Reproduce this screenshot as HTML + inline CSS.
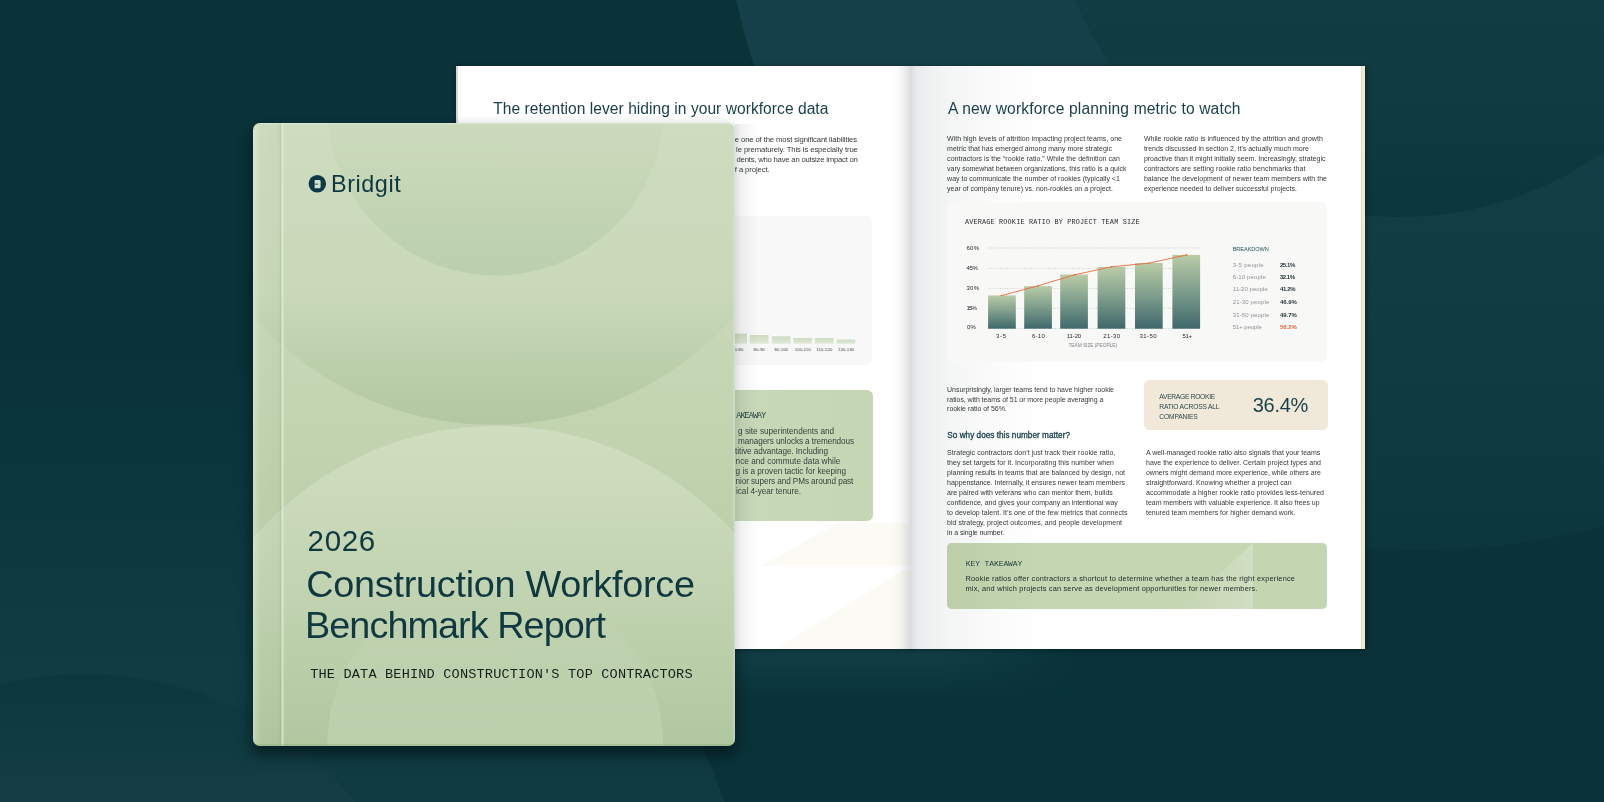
<!DOCTYPE html>
<html lang="en">
<head>
<meta charset="utf-8">
<title>2026 Construction Workforce Benchmark Report</title>
<style>
html,body{margin:0;padding:0;background:#093339;}
body{width:1604px;height:802px;overflow:hidden;font-family:"Liberation Sans",sans-serif;}
#stage{position:relative;width:1604px;height:802px;overflow:hidden;background:#093339;}
.abs{position:absolute;}
.t{position:absolute;white-space:pre;line-height:1;font-family:"Liberation Sans",sans-serif;opacity:.999;}
#bg{position:absolute;left:0;top:0;}
#book{position:absolute;left:0;top:0;width:1604px;height:802px;}
#cover{position:absolute;left:253px;top:123px;width:482px;height:623px;border-radius:7px;overflow:hidden;
  background:linear-gradient(180deg,#cedcbf 0%,#c8d8b8 30%,#c1d3af 52%,#b9cda8 75%,#b0c7a0 100%);}
#covershadow{position:absolute;left:253px;top:123px;width:482px;height:623px;border-radius:7px;
  box-shadow:0 8px 14px 1px rgba(2,14,18,.62);clip-path:polygon(-40px -40px,482px -40px,482px 527px,540px 527px,540px 700px,-40px 700px);}
</style>
</head>
<body>
<div id="stage">

<!-- ================= BACKGROUND ================= -->
<svg id="bg" width="1604" height="802" viewBox="0 0 1604 802">
  <defs>
    <linearGradient id="gB" gradientUnits="userSpaceOnUse" x1="0" y1="0" x2="0" y2="560">
      <stop offset="0" stop-color="#16414a"/><stop offset=".4" stop-color="#123d45"/><stop offset=".8" stop-color="#0e3941"/><stop offset="1" stop-color="#0c363e"/>
    </linearGradient>
    <linearGradient id="gA" gradientUnits="userSpaceOnUse" x1="0" y1="0" x2="0" y2="217">
      <stop offset="0" stop-color="#123c44"/><stop offset=".5" stop-color="#0f3a42"/><stop offset="1" stop-color="#0a363e"/>
    </linearGradient>
    <linearGradient id="gD" gradientUnits="userSpaceOnUse" x1="0" y1="347" x2="0" y2="802">
      <stop offset="0" stop-color="#093339"/><stop offset=".35" stop-color="#0c373e"/><stop offset=".72" stop-color="#103c44"/><stop offset="1" stop-color="#0f3a41"/>
    </linearGradient>
    <linearGradient id="gC" gradientUnits="userSpaceOnUse" x1="0" y1="674" x2="0" y2="802">
      <stop offset="0" stop-color="#0b373f"/><stop offset="1" stop-color="#153e44"/>
    </linearGradient>
    <linearGradient id="gU" gradientUnits="userSpaceOnUse" x1="0" y1="649" x2="0" y2="700">
      <stop offset="0" stop-color="#1a4850" stop-opacity=".55"/><stop offset="1" stop-color="#1a4850" stop-opacity="0"/>
    </linearGradient>
    <linearGradient id="gUm" gradientUnits="userSpaceOnUse" x1="735" y1="0" x2="1080" y2="0">
      <stop offset="0" stop-color="#fff"/><stop offset=".6" stop-color="#fff"/><stop offset="1" stop-color="#000"/>
    </linearGradient>
    <mask id="mU"><rect x="735" y="640" width="400" height="70" fill="url(#gUm)"/></mask>
  </defs>
  <rect width="1604" height="802" fill="#093339"/>
  <circle cx="85" cy="1024" r="677" fill="url(#gD)"/>
  <circle cx="85" cy="1024" r="350" fill="url(#gC)"/>
  <circle cx="1420" cy="-150" r="700" fill="url(#gB)"/>
  <circle cx="1400" cy="-135" r="352" fill="url(#gA)"/>
  <rect x="735" y="649" width="400" height="55" fill="url(#gU)" mask="url(#mU)"/>
</svg>

<!-- ================= OPEN BOOK ================= -->
<div id="book">
  <div class="abs" style="left:456px;top:65.8px;width:909.3px;height:583.7px;box-shadow:1px 1px 4px rgba(0,18,22,.6);background:linear-gradient(90deg,#d6d2c6 0,#e2dfd4 2.6px,#fff 3.6px,#fff 904.6px,#d9d5cc 904.6px,#e6dfc4 906px,#f1eac6 906.4px,#f4eecd 100%);"></div>
  <!-- left page -->
  <div class="abs" id="lp" style="left:458px;top:65.8px;width:452px;height:583.7px;background:#fff;overflow:hidden;">
    <!-- cream geometric pattern at bottom -->
    <svg class="abs" style="left:0;top:0" width="452" height="583" viewBox="0 0 452 583">
      <polygon points="302,500 380,457 452,457 452,500" fill="#fbfaf4"/>
      <polygon points="318,583 445.7,504 452,504 452,583" fill="#fbfaf4"/>
    </svg>
    <!-- chart card -->
    <div class="abs" style="left:35.6px;top:150px;width:378.5px;height:149px;border-radius:6px;background:#f8f8f8;"></div>
    <svg class="abs" style="left:0;top:0" width="452" height="583" viewBox="458 66 452 583">
      <defs><linearGradient id="lb" x1="0" y1="0" x2="0" y2="1"><stop offset="0" stop-color="#cfdcc2"/><stop offset="1" stop-color="#dfe8d6"/></linearGradient></defs>
      <g fill="url(#lb)">
        <rect x="706.6" y="329" width="18.8" height="14.7"/>
        <rect x="728.2" y="333.6" width="18.8" height="10.1"/>
        <rect x="749.8" y="335" width="18.8" height="8.7"/>
        <rect x="771.8" y="336.3" width="18.8" height="7.4"/>
        <rect x="793.3" y="338" width="18.8" height="5.7"/>
        <rect x="814.8" y="338" width="18.8" height="5.7"/>
        <rect x="836.6" y="339.6" width="18.8" height="4.1"/>
      </g>
      <g font-family="'Liberation Sans',sans-serif" font-size="4.4" fill="#3a3f42" text-anchor="middle">
        <text x="737.6" y="350.8">70-80</text>
        <text x="759.2" y="350.8">80-90</text>
        <text x="781.2" y="350.8">90-100</text>
        <text x="802.7" y="350.8">100-110</text>
        <text x="824.2" y="350.8">110-120</text>
        <text x="846" y="350.8">120-130</text>
      </g>
    </svg>
    <!-- key takeaway box -->
    <div class="abs" style="left:35.6px;top:324px;width:379.4px;height:131.4px;border-radius:6px;background:linear-gradient(90deg,#c2d4b0 0%,#c9d9b9 55%,#c5d6b4 100%);"></div>
    <!-- gutter shadow -->
    <div class="abs" style="right:0;top:0;width:16px;height:584px;background:linear-gradient(90deg,rgba(120,122,130,0) 0%,rgba(120,122,130,.07) 45%,rgba(110,112,120,.21) 100%);"></div>
  </div>
  <!-- right page -->
  <div class="abs" id="rp" style="left:910px;top:65.8px;width:450.8px;height:583.7px;background:#fff;overflow:hidden;">
    <div class="abs" style="left:0;top:0;width:130px;height:584px;background:linear-gradient(90deg,#d9dadd 0%,#e6e8e9 4%,#eeeff0 12%,#f4f5f5 30%,#fafafa 60%,#fff 100%);"></div>
    <!-- chart card -->
    <div class="abs" style="left:37.3px;top:136.5px;width:379.4px;height:159.5px;border-radius:6px;background:#f8f8f7;"></div>
    <!-- stat box -->
    <div class="abs" style="left:234px;top:314px;width:183.6px;height:50px;border-radius:5.5px;background:#f0e9d9;"></div>
    <!-- key takeaway -->
    <div class="abs" style="left:36.8px;top:477px;width:380.4px;height:65.8px;border-radius:5px;overflow:hidden;background:#c5d6b3;">
      <svg class="abs" style="left:0;top:0" width="381" height="66" viewBox="0 0 381 66">
        <defs><linearGradient id="kt" x1="0" y1="0" x2="1" y2="0"><stop offset="0" stop-color="#bccfa9"/><stop offset="1" stop-color="#c4d5b2"/></linearGradient></defs>
        <rect x="0" y="0" width="84" height="66" fill="url(#kt)"/>
        <defs><linearGradient id="tri" x1="0" y1="0" x2="1" y2="0"><stop offset="0" stop-color="#c9d9b9" stop-opacity=".2"/><stop offset="1" stop-color="#d1dfc3"/></linearGradient></defs><polygon points="233,66 306,0 306,66" fill="url(#tri)"/>
        <rect x="306" y="0" width="75" height="66" fill="#c4d5b2"/>
      </svg>
    </div>
    <svg class="abs" style="left:0;top:0" width="450.8" height="583" viewBox="910 66 450.8 583">
      <defs><linearGradient id="bar" x1="0" y1="0" x2="0" y2="1"><stop offset="0" stop-color="#b9cca6"/><stop offset=".5" stop-color="#7d9d8c"/><stop offset="1" stop-color="#3f686b"/></linearGradient></defs>
      <g stroke="#b9bcb9" stroke-width=".8" stroke-dasharray=".9 1.5" fill="none">
        <path d="M988 248H1200.5M988 268.4H1200.5M988 288.4H1200.5M988 308.3H1200.5M988 328.5H1200.5"/>
      </g>
      <g fill="url(#bar)">
        <rect x="988.1" y="295.4" width="27.7" height="33.3"/>
        <rect x="1024.2" y="286.1" width="27.7" height="42.6"/>
        <rect x="1060.2" y="274.5" width="27.7" height="54.2"/>
        <rect x="1097.6" y="267.0" width="27.7" height="61.7"/>
        <rect x="1135.0" y="263.0" width="27.7" height="65.7"/>
        <rect x="1172.4" y="254.9" width="27.7" height="73.8"/>
      </g>
      <polyline points="1001.4,295.6 1038.1,285.8 1074.6,274.8 1111.4,266.8 1148.8,263.2 1186.8,254.9" fill="none" stroke="#ee6a3a" stroke-width=".9" stroke-linejoin="round"/>
      <g fill="#ea6a3c"><circle cx="1001.4" cy="295.6" r=".8"/><circle cx="1038.1" cy="285.8" r=".8"/><circle cx="1074.6" cy="274.8" r=".8"/><circle cx="1111.4" cy="266.8" r=".8"/><circle cx="1148.8" cy="263.2" r=".8"/><circle cx="1186.8" cy="254.9" r=".8"/></g>
    </svg>
  </div>
<div class="t" style="top:100.69px;font-size:15.6px;color:#173f49;letter-spacing:0.144px;left:948.00px;">A new workforce planning metric to watch</div>
<div class="t" style="top:100.69px;font-size:15.6px;color:#173f49;letter-spacing:0.031px;left:493.20px;">The retention lever hiding in your workforce data</div>
<div class="t" style="top:134.77px;font-size:7px;color:#35393c;letter-spacing:0.031px;left:947.10px;">With high levels of attrition impacting project teams, one</div>
<div class="t" style="top:144.77px;font-size:7px;color:#35393c;letter-spacing:0.013px;left:947.10px;">metric that has emerged among many more strategic</div>
<div class="t" style="top:154.77px;font-size:7px;color:#35393c;letter-spacing:0.034px;left:947.10px;">contractors is the “rookie ratio.” While the definition can</div>
<div class="t" style="top:164.77px;font-size:7px;color:#35393c;letter-spacing:-0.020px;left:947.10px;">vary somewhat between organizations, this ratio is a quick</div>
<div class="t" style="top:174.77px;font-size:7px;color:#35393c;letter-spacing:0.004px;left:947.10px;">way to communicate the number of rookies (typically &lt;1</div>
<div class="t" style="top:184.77px;font-size:7px;color:#35393c;letter-spacing:0.003px;left:947.10px;">year of company tenure) vs. non-rookies on a project.</div>
<div class="t" style="top:134.77px;font-size:7px;color:#35393c;letter-spacing:0.025px;left:1143.90px;">While rookie ratio is influenced by the attrition and growth</div>
<div class="t" style="top:144.77px;font-size:7px;color:#35393c;letter-spacing:0.005px;left:1143.90px;">trends discussed in section 2, it’s actually much more</div>
<div class="t" style="top:154.77px;font-size:7px;color:#35393c;left:1143.90px;">proactive than it might initially seem. Increasingly, strategic</div>
<div class="t" style="top:164.77px;font-size:7px;color:#35393c;letter-spacing:0.039px;left:1143.90px;">contractors are setting rookie ratio benchmarks that</div>
<div class="t" style="top:174.77px;font-size:7px;color:#35393c;letter-spacing:0.026px;left:1143.90px;">balance the development of newer team members with the</div>
<div class="t" style="top:184.77px;font-size:7px;color:#35393c;letter-spacing:0.004px;left:1143.90px;">experience needed to deliver successful projects.</div>
<div class="t" style="top:218.89px;font-size:6.8px;color:#2a2f31;font-family:'Liberation Mono', monospace;letter-spacing:0.182px;left:965.00px;">AVERAGE ROOKIE RATIO BY PROJECT TEAM SIZE</div>
<div class="t" style="top:385.57px;font-size:7px;color:#35393c;letter-spacing:-0.048px;left:947.10px;">Unsurprisingly, larger teams tend to have higher rookie</div>
<div class="t" style="top:395.52px;font-size:7px;color:#35393c;letter-spacing:-0.067px;left:947.10px;">ratios, with teams of 51 or more people averaging a</div>
<div class="t" style="top:405.47px;font-size:7px;color:#35393c;letter-spacing:-0.032px;left:947.10px;">rookie ratio of 56%.</div>
<div class="t" style="top:393.63px;font-size:6.7px;color:#2c474c;letter-spacing:-0.294px;left:1159.30px;">AVERAGE ROOKIE</div>
<div class="t" style="top:403.63px;font-size:6.7px;color:#2c474c;letter-spacing:-0.184px;left:1159.30px;">RATIO ACROSS ALL</div>
<div class="t" style="top:413.63px;font-size:6.7px;color:#2c474c;letter-spacing:-0.155px;left:1159.30px;">COMPANIES</div>
<div class="t" style="top:395.07px;font-size:20px;color:#173f49;letter-spacing:-0.305px;left:1252.80px;">36.4%</div>
<div class="t" style="top:432.06px;font-size:8.2px;color:#173f49;letter-spacing:0.024px;left:947.30px;-webkit-text-stroke:0.3px #173f49;">So why does this number matter?</div>
<div class="t" style="top:448.57px;font-size:7px;color:#35393c;letter-spacing:0.050px;left:947.10px;">Strategic contractors don’t just track their rookie ratio,</div>
<div class="t" style="top:458.58px;font-size:7px;color:#35393c;letter-spacing:0.028px;left:947.10px;">they set targets for it. Incorporating this number when</div>
<div class="t" style="top:468.59px;font-size:7px;color:#35393c;letter-spacing:-0.020px;left:947.10px;">planning results in teams that are balanced by design, not</div>
<div class="t" style="top:478.60px;font-size:7px;color:#35393c;letter-spacing:-0.032px;left:947.10px;">happenstance. Internally, it ensures newer team members</div>
<div class="t" style="top:488.61px;font-size:7px;color:#35393c;letter-spacing:-0.009px;left:947.10px;">are paired with veterans who can mentor them, builds</div>
<div class="t" style="top:498.62px;font-size:7px;color:#35393c;letter-spacing:-0.017px;left:947.10px;">confidence, and gives your company an intentional way</div>
<div class="t" style="top:508.63px;font-size:7px;color:#35393c;letter-spacing:0.039px;left:947.10px;">to develop talent. It’s one of the few metrics that connects</div>
<div class="t" style="top:518.64px;font-size:7px;color:#35393c;letter-spacing:0.028px;left:947.10px;">bid strategy, project outcomes, and people development</div>
<div class="t" style="top:528.65px;font-size:7px;color:#35393c;letter-spacing:-0.087px;left:947.10px;">in a single number.</div>
<div class="t" style="top:449.47px;font-size:7px;color:#35393c;letter-spacing:-0.014px;left:1146.00px;">A well-managed rookie ratio also signals that your teams</div>
<div class="t" style="top:459.47px;font-size:7px;color:#35393c;letter-spacing:0.005px;left:1146.00px;">have the experience to deliver. Certain project types and</div>
<div class="t" style="top:469.47px;font-size:7px;color:#35393c;letter-spacing:-0.028px;left:1146.00px;">owners might demand more experience, while others are</div>
<div class="t" style="top:479.47px;font-size:7px;color:#35393c;letter-spacing:-0.007px;left:1146.00px;">straightforward. Knowing whether a project can</div>
<div class="t" style="top:489.47px;font-size:7px;color:#35393c;letter-spacing:0.025px;left:1146.00px;">accommodate a higher rookie ratio provides less-tenured</div>
<div class="t" style="top:499.47px;font-size:7px;color:#35393c;letter-spacing:-0.028px;left:1146.00px;">team members with valuable experience. It also frees up</div>
<div class="t" style="top:509.47px;font-size:7px;color:#35393c;letter-spacing:-0.009px;left:1146.00px;">tenured team members for higher demand work.</div>
<div class="t" style="top:560.37px;font-size:8px;color:#24413f;font-family:'Liberation Mono', monospace;letter-spacing:-0.101px;left:965.80px;">KEY TAKEAWAY</div>
<div class="t" style="top:575.24px;font-size:7.4px;color:#222c28;letter-spacing:0.207px;left:965.50px;">Rookie ratios offer contractors a shortcut to determine whether a team has the right experience</div>
<div class="t" style="top:585.14px;font-size:7.4px;color:#222c28;letter-spacing:0.184px;left:965.50px;">mix, and which projects can serve as development opportunities for newer members.</div>
<div class="t" style="top:135.68px;font-size:7.7px;color:#35393c;letter-spacing:-0.118px;left:734.80px;">e one of the most significant liabilities</div>
<div class="t" style="top:145.71px;font-size:7.7px;color:#35393c;letter-spacing:-0.104px;left:736.10px;">le prematurely. This is especially true</div>
<div class="t" style="top:155.74px;font-size:7.7px;color:#35393c;letter-spacing:-0.207px;left:736.50px;">dents, who have an outsize impact on</div>
<div class="t" style="top:165.77px;font-size:7.7px;color:#35393c;letter-spacing:-0.091px;left:734.80px;">f a project.</div>
<div class="t" style="top:411.71px;font-size:8.2px;color:#24413f;font-family:'Liberation Mono', monospace;letter-spacing:-0.751px;left:736.30px;">AKEAWAY</div>
<div class="t" style="top:427.61px;font-size:8.2px;color:#34423c;letter-spacing:-0.002px;left:738.10px;">g site superintendents and</div>
<div class="t" style="top:437.63px;font-size:8.2px;color:#34423c;letter-spacing:-0.100px;left:738.10px;">managers unlocks a tremendous</div>
<div class="t" style="top:447.65px;font-size:8.2px;color:#34423c;letter-spacing:-0.061px;left:735.00px;">titive advantage. Including</div>
<div class="t" style="top:457.67px;font-size:8.2px;color:#34423c;letter-spacing:0.019px;left:735.60px;">nce and commute data while</div>
<div class="t" style="top:467.69px;font-size:8.2px;color:#34423c;letter-spacing:-0.021px;left:735.60px;">g is a proven tactic for keeping</div>
<div class="t" style="top:477.71px;font-size:8.2px;color:#34423c;letter-spacing:-0.094px;left:735.60px;">nior supers and PMs around past</div>
<div class="t" style="top:487.73px;font-size:8.2px;color:#34423c;letter-spacing:-0.025px;left:736.00px;">ical 4-year tenure.</div>
<div class="t" style="top:245.42px;font-size:6px;color:#1f2527;letter-spacing:0.292px;left:966.40px;">60%</div>
<div class="t" style="top:264.82px;font-size:6px;color:#1f2527;letter-spacing:-0.258px;left:966.40px;">45%</div>
<div class="t" style="top:284.72px;font-size:6px;color:#1f2527;letter-spacing:0.292px;left:966.40px;">30%</div>
<div class="t" style="top:304.92px;font-size:6px;color:#1f2527;letter-spacing:-0.808px;left:966.40px;">15%</div>
<div class="t" style="top:323.62px;font-size:6px;color:#1f2527;letter-spacing:0.228px;left:967.00px;">0%</div>
<div class="t" style="top:332.92px;font-size:6px;color:#1f2527;letter-spacing:0.814px;left:995.90px;">3-5</div>
<div class="t" style="top:332.92px;font-size:6px;color:#1f2527;letter-spacing:0.261px;left:1032.00px;">6-10</div>
<div class="t" style="top:332.92px;font-size:6px;color:#1f2527;letter-spacing:-0.127px;left:1066.80px;">11-20</div>
<div class="t" style="top:332.92px;font-size:6px;color:#1f2527;letter-spacing:0.335px;left:1103.30px;">21-30</div>
<div class="t" style="top:332.92px;font-size:6px;color:#1f2527;letter-spacing:0.410px;left:1139.50px;">31-50</div>
<div class="t" style="top:332.92px;font-size:6px;color:#1f2527;letter-spacing:-0.344px;left:1182.40px;">51+</div>
<div class="t" style="top:343.54px;font-size:4.8px;color:#80868a;letter-spacing:-0.026px;left:1068.40px;">TEAM SIZE (PEOPLE)</div>
<div class="t" style="top:247.36px;font-size:5.6px;color:#2f5560;letter-spacing:-0.061px;left:1232.70px;">BREAKDOWN</div>
<div class="t" style="top:261.72px;font-size:6px;color:#8e9394;letter-spacing:0.282px;left:1232.70px;">3-5 people</div>
<div class="t" style="top:261.72px;font-size:6px;color:#26383c;font-weight:700;letter-spacing:-0.379px;left:1279.90px;">25.1%</div>
<div class="t" style="top:273.82px;font-size:6px;color:#8e9394;letter-spacing:0.150px;left:1232.70px;">6-10 people</div>
<div class="t" style="top:273.82px;font-size:6px;color:#26383c;font-weight:700;letter-spacing:-0.479px;left:1279.90px;">32.1%</div>
<div class="t" style="top:286.42px;font-size:6px;color:#8e9394;letter-spacing:0.046px;left:1232.70px;">11-20 people</div>
<div class="t" style="top:286.42px;font-size:6px;color:#26383c;font-weight:700;letter-spacing:-0.304px;left:1279.90px;">41.2%</div>
<div class="t" style="top:299.12px;font-size:6px;color:#8e9394;letter-spacing:0.143px;left:1232.70px;">21-30 people</div>
<div class="t" style="top:299.12px;font-size:6px;color:#26383c;font-weight:700;letter-spacing:-0.004px;left:1279.90px;">46.9%</div>
<div class="t" style="top:311.82px;font-size:6px;color:#8e9394;letter-spacing:0.143px;left:1232.70px;">31-50 people</div>
<div class="t" style="top:311.82px;font-size:6px;color:#26383c;font-weight:700;letter-spacing:-0.004px;left:1279.90px;">49.7%</div>
<div class="t" style="top:324.32px;font-size:6px;color:#8e9394;letter-spacing:-0.086px;left:1232.70px;">51+ people</div>
<div class="t" style="top:324.32px;font-size:6px;color:#e9623b;font-weight:700;letter-spacing:-0.004px;left:1279.90px;">56.2%</div>
</div>

<!-- ================= COVER ================= -->
<div id="covershadow"></div>
<div class="abs" style="left:735px;top:124px;width:24px;height:525px;background:linear-gradient(90deg,rgba(40,52,52,.15),rgba(40,52,52,.07) 25%,rgba(40,52,52,.03) 60%,rgba(40,52,52,0));"></div>
<div id="cover">
  <svg class="abs" style="left:0;top:0" width="482" height="623" viewBox="0 0 482 623">
    <defs>
      <linearGradient id="c1" gradientUnits="userSpaceOnUse" x1="0" y1="0" x2="0" y2="152">
        <stop offset="0" stop-color="#9fbe92" stop-opacity=".07"/><stop offset=".3" stop-color="#9fbe92" stop-opacity=".12"/><stop offset="1" stop-color="#9fbe92" stop-opacity=".34"/>
      </linearGradient>
      <linearGradient id="c2" gradientUnits="userSpaceOnUse" x1="0" y1="170" x2="0" y2="302">
        <stop offset="0" stop-color="#96b487" stop-opacity="0"/><stop offset="1" stop-color="#96b487" stop-opacity=".36"/>
      </linearGradient>
      <linearGradient id="c3" gradientUnits="userSpaceOnUse" x1="0" y1="303" x2="0" y2="623">
        <stop offset="0" stop-color="#e4edd6" stop-opacity=".42"/><stop offset=".5" stop-color="#e4edd6" stop-opacity=".2"/><stop offset="1" stop-color="#e4edd6" stop-opacity="0"/>
      </linearGradient>
      <linearGradient id="c4" gradientUnits="userSpaceOnUse" x1="0" y1="485" x2="0" y2="623">
        <stop offset="0" stop-color="#e4edd6" stop-opacity="0"/><stop offset="1" stop-color="#e4edd6" stop-opacity=".24"/>
      </linearGradient>
      <linearGradient id="sp" x1="0" y1="0" x2="1" y2="0">
        <stop offset="0" stop-color="#fff" stop-opacity=".26"/><stop offset=".14" stop-color="#fff" stop-opacity=".12"/><stop offset=".4" stop-color="#6f9060" stop-opacity=".02"/><stop offset=".88" stop-color="#6f9060" stop-opacity=".05"/><stop offset=".94" stop-color="#6f9060" stop-opacity=".10"/><stop offset="1" stop-color="#5f8052" stop-opacity=".24"/>
      </linearGradient>
    </defs>
    <circle cx="240.6" cy="-18.8" r="320.6" fill="url(#c2)"/>
    <circle cx="242.8" cy="-15.9" r="168.4" fill="url(#c1)"/>
    <circle cx="243" cy="621.1" r="318.2" fill="url(#c3)"/>
    <circle cx="242.3" cy="622" r="168" fill="url(#c4)"/>
    <!-- spine -->
    <rect x="0" y="0" width="28.2" height="623" fill="url(#sp)"/>
    <rect x="28.3" y="0" width="2.3" height="623" fill="#e3eed6" fill-opacity=".6"/>
    <rect x="30.6" y="0" width="1" height="623" fill="#e3eed6" fill-opacity=".15"/>
    <!-- edge highlights -->
    <rect x="0" y="0" width="482" height="1.2" fill="#fff" fill-opacity=".28"/>
    <rect x="480.4" y="0" width="1.6" height="623" fill="#fff" fill-opacity=".22"/>
    <rect x="0" y="621" width="482" height="2" fill="#6f8f5f" fill-opacity=".22"/>
    <!-- logo -->
    <circle cx="64.3" cy="60.7" r="8.75" fill="#0d3a47"/>
    <path d="M62.2 57.1h4a1.4 1.4 0 0 1 1.4 1.4v5.4a1.4 1.4 0 0 1 -1.4 1.4h-4a.6.6 0 0 1 -.6 -.6v-3.25h3.7v-.75h-3.7v-3a.6.6 0 0 1 .6 -.6z" fill="#d5e3c8"/>
  </svg>
</div>
<div class="t" style="top:172.59px;font-size:23.4px;color:#0f3841;letter-spacing:0.565px;left:331.00px;">Bridgit</div>
<div class="t" style="top:526.43px;font-size:29.5px;color:#0f3841;letter-spacing:0.686px;left:307.60px;">2026</div>
<div class="t" style="top:565.80px;font-size:37.8px;color:#0f3841;letter-spacing:-0.263px;left:306.30px;">Construction Workforce</div>
<div class="t" style="top:607.10px;font-size:37.8px;color:#0f3841;letter-spacing:-0.941px;left:305.00px;">Benchmark Report</div>
<div class="t" style="top:668.48px;font-size:13.6px;color:#13201b;font-family:'Liberation Mono', monospace;letter-spacing:0.159px;left:310.20px;">THE DATA BEHIND CONSTRUCTION&#x27;S TOP CONTRACTORS</div>
</div>
</body>
</html>
